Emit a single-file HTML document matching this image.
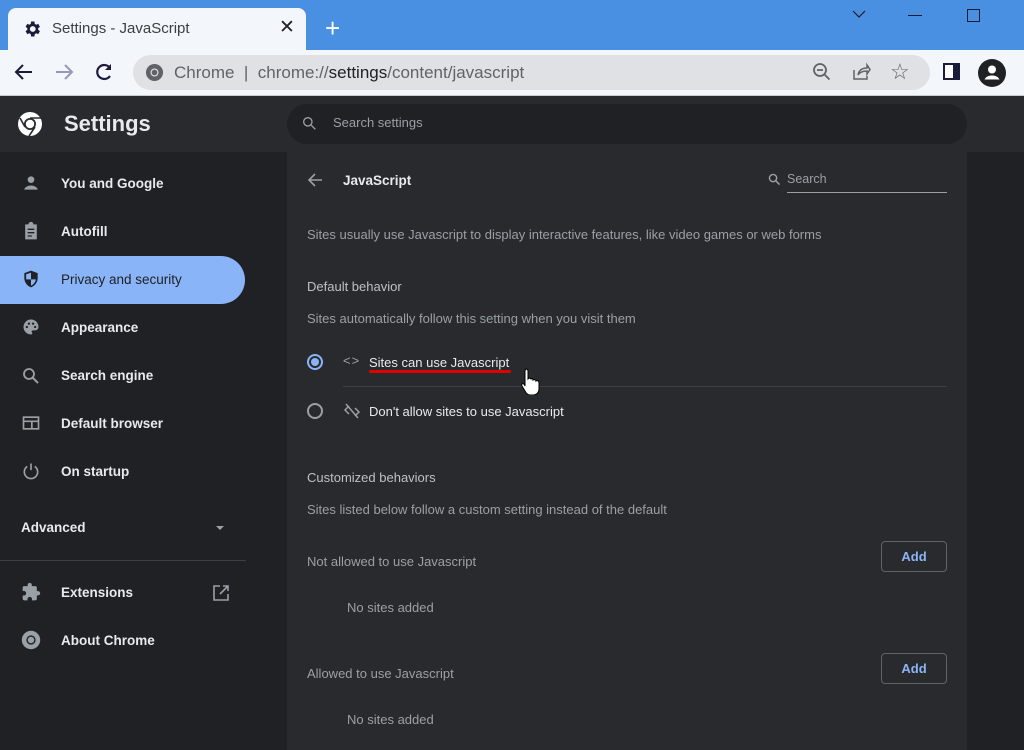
<!DOCTYPE html>
<html><head><meta charset="utf-8"><style>
*{margin:0;padding:0;box-sizing:border-box}
body{width:1024px;height:750px;overflow:hidden;background:#202124;font-family:"Liberation Sans",Arial,sans-serif;position:relative}
.a{position:absolute}
.t{position:absolute;white-space:nowrap}
.side{font-size:13.5px;font-weight:bold;color:#e8eaed}
.sec{color:#9aa0a6;font-size:13px}
.lbl{color:#e8eaed;font-size:13px}
.btn{position:absolute;width:66px;height:31px;border:1px solid #5f6368;border-radius:4px;color:#8ab4f8;font-size:13px;font-weight:bold;text-align:center;line-height:29px}
</style></head><body>
<div class="a" style="left:0;top:0;width:1024px;height:50px;background:#4a90e2"></div>
<div class="a" style="left:8px;top:8px;width:298px;height:44px;background:#f3f6fa;border-radius:8px 8px 0 0"></div>
<svg class="a" style="left:22px;top:19px" width="20" height="20" viewBox="0 0 24 24"><path fill="#1d1b3a" d="M19.4 13a7.5 7.5 0 000-2l2.1-1.6-2-3.5-2.5 1a7 7 0 00-1.7-1L14.9 3h-4l-.4 2.9a7 7 0 00-1.7 1l-2.5-1-2 3.5L6.4 11a7.5 7.5 0 000 2l-2.1 1.6 2 3.5 2.5-1a7 7 0 001.7 1l.4 2.9h4l.4-2.9a7 7 0 001.7-1l2.5 1 2-3.5zM12.9 15.5a3.5 3.5 0 110-7 3.5 3.5 0 010 7z"/></svg>
<div class="t" style="left:52px;top:20px;font-size:15px;color:#3c4043">Settings - JavaScript</div>
<div class="t" style="left:279px;top:16px;font-size:19px;color:#202124">✕</div>
<div class="t" style="left:325px;top:13px;font-size:26px;color:#fff;font-weight:300">+</div>
<svg class="a" style="left:852px;top:9px" width="14" height="10"><path d="M1 2l6 6 6-6" stroke="#1a1a2e" fill="none" stroke-width="1.2"/></svg>
<div class="a" style="left:908px;top:15px;width:14px;height:1px;background:#1a1a2e"></div>
<div class="a" style="left:967px;top:9px;width:13px;height:13px;border:1px solid #1a1a2e"></div>
<div class="a" style="left:0;top:50px;width:1024px;height:46px;background:#f3f6fa;border-bottom:1px solid #c8ccd2"></div>
<svg class="a" style="left:14px;top:62px" width="20" height="20" viewBox="0 0 20 20"><path d="M18 10H3M9 3l-7 7 7 7" stroke="#1d1b3a" stroke-width="2" fill="none"/></svg>
<svg class="a" style="left:54px;top:62px" width="20" height="20" viewBox="0 0 20 20"><path d="M2 10h15M11 3l7 7-7 7" stroke="#9a98b8" stroke-width="2" fill="none"/></svg>
<svg class="a" style="left:94px;top:62px" width="20" height="20" viewBox="0 0 20 20"><path d="M16 6a7 7 0 100 8" stroke="#1d1b3a" stroke-width="2.2" fill="none"/><path d="M17 2v6h-6z" fill="#1d1b3a"/></svg>
<div class="a" style="left:133px;top:55px;width:797px;height:35px;background:#dfe1e5;border-radius:18px"></div>
<svg class="a" style="left:145px;top:63px" width="19" height="19" viewBox="0 0 20 20"><circle cx="10" cy="10" r="9" fill="#5f6368"/><circle cx="10" cy="10" r="4.2" fill="#dfe1e5"/><circle cx="10" cy="10" r="3" fill="#5f6368"/></svg>
<div class="t" style="left:174px;top:63px;font-size:17px;color:#5f6368">Chrome &nbsp;|&nbsp; chrome://<span style="color:#202124">settings</span>/content/javascript</div>
<svg class="a" style="left:812px;top:62px" width="20" height="20" viewBox="0 0 20 20"><circle cx="8" cy="8" r="6" stroke="#5f6368" stroke-width="1.8" fill="none"/><path d="M5 8h6M12.5 12.5l5 5" stroke="#5f6368" stroke-width="1.8"/></svg>
<svg class="a" style="left:851px;top:62px" width="20" height="20" viewBox="0 0 20 20"><path d="M3 8v9h13v-3M7 13c1-5 4-7 9-7V3l3 4.5-3 4.5V9c-4 0-7 1-9 4z" stroke="#5f6368" stroke-width="1.5" fill="none"/></svg>
<div class="t" style="left:890px;top:59px;font-size:22px;color:#5f6368">☆</div>
<div class="a" style="left:943px;top:63px;width:17px;height:17px;background:#1d1b3a;border:2px solid #1d1b3a"><div style="width:8px;height:13px;background:#fff"></div></div>
<svg class="a" style="left:978px;top:59px" width="28" height="28" viewBox="0 0 28 28"><circle cx="14" cy="14" r="14" fill="#202124"/><circle cx="14" cy="10.5" r="4" fill="#fff"/><path d="M6.5 20.5c1.5-3 4.5-4 7.5-4s6 1 7.5 4z" fill="#fff"/></svg>
<div class="a" style="left:0;top:96px;width:1024px;height:56px;background:#292a2d"></div>
<svg class="a" style="left:17px;top:111px" width="26" height="26" viewBox="0 0 26 26"><circle cx="13" cy="13" r="12" fill="#fff"/><circle cx="13" cy="13" r="6" fill="#292a2d"/><circle cx="13" cy="13" r="4.2" fill="#fff"/><path d="M13 7h11M8 16L3 7M18 16l-6 9" stroke="#292a2d" stroke-width="1.6"/></svg>
<div class="t" style="left:64px;top:111px;font-size:22px;font-weight:bold;color:#e8eaed">Settings</div>
<div class="a" style="left:287px;top:104px;width:680px;height:40px;background:#202124;border-radius:20px"></div>
<svg class="a" style="left:302px;top:116px" width="15" height="15" viewBox="0 0 18 18"><circle cx="7" cy="7" r="5" stroke="#9aa0a6" stroke-width="1.6" fill="none"/><path d="M11 11l5 5" stroke="#9aa0a6" stroke-width="1.6"/></svg>
<div class="t" style="left:333px;top:115px;font-size:13px;color:#9aa0a6">Search settings</div>
<div class="a" style="left:0;top:256px;width:245px;height:48px;background:#8ab4f8;border-radius:0 24px 24px 0"></div>
<svg class="a" style="left:21px;top:173px" width="20" height="20" viewBox="0 0 24 24" fill="#9aa0a6"><circle cx="12" cy="8" r="4"/><path d="M4 20c0-3 5-5 8-5s8 2 8 5v0z"/></svg>
<div class="t side" style="left:61px;top:176px">You and Google</div>
<svg class="a" style="left:21px;top:221px" width="20" height="20" viewBox="0 0 24 24" fill="#9aa0a6"><path d="M5 4h4a3 3 0 016 0h4v18H5z"/><path d="M8 10h8M8 14h8M8 18h5" stroke="#202124" stroke-width="1.6"/></svg>
<div class="t side" style="left:61px;top:224px">Autofill</div>
<svg class="a" style="left:21px;top:269px" width="20" height="20" viewBox="0 0 24 24"><path d="M12 2l8 3v6c0 5-3.5 9.5-8 11-4.5-1.5-8-6-8-11V5z" fill="#202124"/><path d="M12 4.5v8H6.2V6.3zM12 12.5h5.8c-.6 3.5-3 6.5-5.8 7.5z" fill="#8ab4f8"/></svg>
<div class="t side" style="left:61px;top:272px;color:#202124;font-weight:normal">Privacy and security</div>
<svg class="a" style="left:21px;top:317px" width="20" height="20" viewBox="0 0 24 24" fill="#9aa0a6"><path d="M12 3a9 9 0 000 18c1 0 1.5-.7 1.5-1.5 0-1-.8-1.2-.8-2S13.5 16 14.5 16H17a4 4 0 004-4c0-5-4-9-9-9z"/><circle cx="7" cy="12" r="1.4" fill="#202124"/><circle cx="9.5" cy="8" r="1.4" fill="#202124"/><circle cx="14.5" cy="8" r="1.4" fill="#202124"/><circle cx="17" cy="12" r="1.4" fill="#202124"/></svg>
<div class="t side" style="left:61px;top:320px">Appearance</div>
<svg class="a" style="left:21px;top:366px" width="20" height="20" viewBox="0 0 20 20"><circle cx="8" cy="8" r="5" stroke="#9aa0a6" stroke-width="1.8" fill="none"/><path d="M12 12l5 5" stroke="#9aa0a6" stroke-width="2"/></svg>
<div class="t side" style="left:61px;top:368px">Search engine</div>
<svg class="a" style="left:21px;top:413px" width="20" height="20" viewBox="0 0 24 24"><rect x="3" y="5" width="18" height="14" stroke="#9aa0a6" stroke-width="2" fill="none"/><path d="M3 10h18M13 10v9" stroke="#9aa0a6" stroke-width="2"/></svg>
<div class="t side" style="left:61px;top:416px">Default browser</div>
<svg class="a" style="left:21px;top:461px" width="20" height="20" viewBox="0 0 24 24"><path d="M7.5 6.5a8 8 0 109 0M12 3v8" stroke="#9aa0a6" stroke-width="2" fill="none"/></svg>
<div class="t side" style="left:61px;top:464px">On startup</div>
<div class="t side" style="left:21px;top:520px">Advanced</div>
<div class="a" style="left:216px;top:526px;border-left:4px solid transparent;border-right:4px solid transparent;border-top:4px solid #9aa0a6"></div>
<div class="a" style="left:0;top:560px;width:246px;height:1px;background:#3c4043"></div>
<svg class="a" style="left:21px;top:582px" width="20" height="20" viewBox="0 0 24 24" fill="#9aa0a6"><path d="M20.5 11H19V7a2 2 0 00-2-2h-4V3.5a2.5 2.5 0 00-5 0V5H4a2 2 0 00-2 2v3.8h1.5a2.7 2.7 0 010 5.4H2V20a2 2 0 002 2h3.8v-1.5a2.7 2.7 0 015.4 0V22H17a2 2 0 002-2v-4h1.5a2.5 2.5 0 000-5z"/></svg>
<div class="t side" style="left:61px;top:585px">Extensions</div>
<svg class="a" style="left:212px;top:584px" width="18" height="18" viewBox="0 0 18 18"><path d="M8 2H2v14h14v-6M11 2h5v5M16 2l-8 8" stroke="#9aa0a6" stroke-width="1.6" fill="none"/></svg>
<svg class="a" style="left:21px;top:630px" width="20" height="20" viewBox="0 0 26 26"><circle cx="13" cy="13" r="12" fill="#9aa0a6"/><circle cx="13" cy="13" r="6" fill="#202124"/><circle cx="13" cy="13" r="4.2" fill="#9aa0a6"/></svg>
<div class="t side" style="left:61px;top:633px">About Chrome</div>
<div class="a" style="left:287px;top:152px;width:680px;height:598px;background:#292a2d"></div>
<svg class="a" style="left:307px;top:172px" width="16" height="16" viewBox="0 0 16 16"><path d="M15 8H2M8 2L2 8l6 6" stroke="#9aa0a6" stroke-width="1.6" fill="none"/></svg>
<div class="t" style="left:343px;top:173px;font-size:13.5px;font-weight:bold;color:#e8eaed">JavaScript</div>
<svg class="a" style="left:768px;top:173px" width="13" height="13" viewBox="0 0 18 18"><circle cx="7" cy="7" r="5" stroke="#9aa0a6" stroke-width="2" fill="none"/><path d="M11 11l5 5" stroke="#9aa0a6" stroke-width="2"/></svg>
<div class="t" style="left:787px;top:172px;font-size:12.5px;color:#9aa0a6">Search</div>
<div class="a" style="left:787px;top:192px;width:160px;height:1px;background:#9aa0a6"></div>
<div class="t sec" style="left:307px;top:227px">Sites usually use Javascript to display interactive features, like video games or web forms</div>
<div class="t lbl" style="left:307px;top:279px;color:#bdc1c6">Default behavior</div>
<div class="t sec" style="left:307px;top:311px">Sites automatically follow this setting when you visit them</div>
<div class="a" style="left:307px;top:354px;width:16px;height:16px;border:2px solid #8ab4f8;border-radius:50%"><div style="margin:2px;width:8px;height:8px;background:#8ab4f8;border-radius:50%"></div></div>
<div class="t" style="left:343px;top:353px;font-size:13px;color:#9aa0a6;letter-spacing:1px">&lt;&gt;</div>
<div class="t lbl" style="left:369px;top:355px">Sites can use Javascript</div>
<div class="a" style="left:369px;top:370px;width:142px;height:3px;background:#e00000;border-radius:2px"></div>
<div class="a" style="left:343px;top:386px;width:604px;height:1px;background:#3c4043"></div>
<div class="a" style="left:307px;top:403px;width:16px;height:16px;border:2px solid #9aa0a6;border-radius:50%"></div>
<svg class="a" style="left:343px;top:403px" width="18" height="16" viewBox="0 0 18 16"><path d="M6 3L2 7l4 4M12 5l4 4-4 4M3 1l12 14" stroke="#9aa0a6" stroke-width="1.5" fill="none"/></svg>
<div class="t lbl" style="left:369px;top:404px">Don't allow sites to use Javascript</div>
<svg class="a" style="left:520px;top:367px" width="22" height="28" viewBox="0 0 22 28"><path d="M6 2c1 0 2 1 2 2v8l1-1c1 0 2 1 2 1 1-1 2 0 2 1 1-1 3 0 3 1 1-1 3 0 3 2v6c0 3-2 6-6 6h-3c-2 0-4-2-5-4l-3-5c-1-1 0-3 2-2l1 2V4c0-1 1-2 1-2z" fill="#fff" stroke="#000" stroke-width="1"/></svg>
<div class="t lbl" style="left:307px;top:470px;color:#bdc1c6">Customized behaviors</div>
<div class="t sec" style="left:307px;top:502px">Sites listed below follow a custom setting instead of the default</div>
<div class="t sec" style="left:307px;top:554px">Not allowed to use Javascript</div>
<div class="btn" style="left:881px;top:541px">Add</div>
<div class="t sec" style="left:347px;top:600px">No sites added</div>
<div class="t sec" style="left:307px;top:666px">Allowed to use Javascript</div>
<div class="btn" style="left:881px;top:653px">Add</div>
<div class="t sec" style="left:347px;top:712px">No sites added</div>
</body></html>
